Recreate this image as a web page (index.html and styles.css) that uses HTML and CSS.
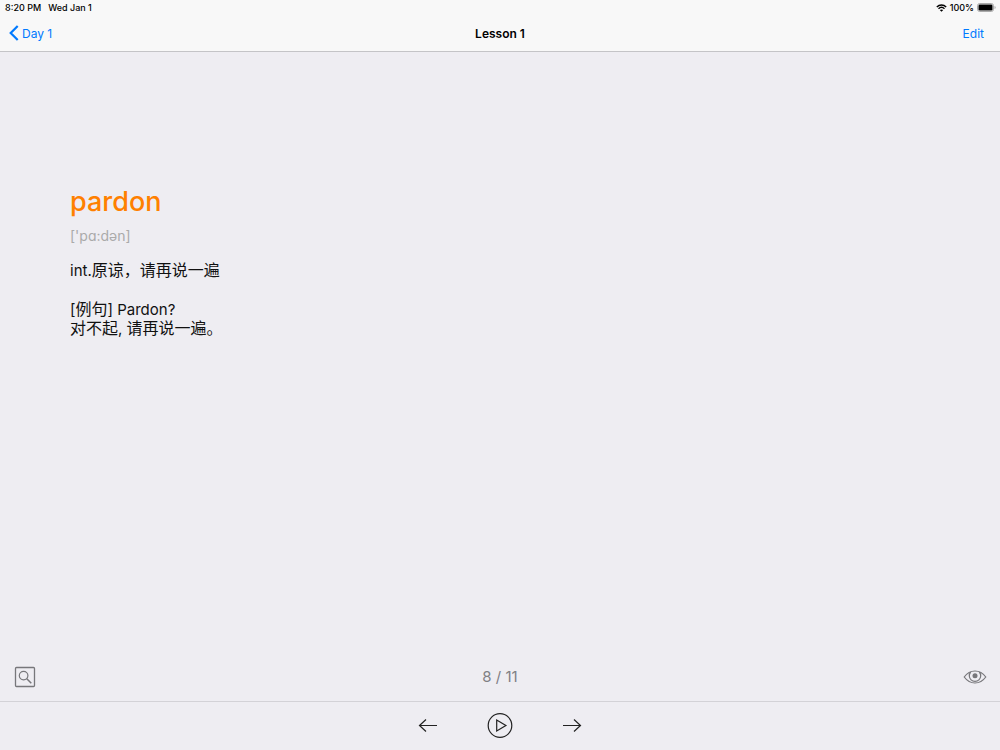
FILE: index.html
```html
<!DOCTYPE html>
<html lang="en">
<head>
    <meta charset="UTF-8">
    <meta name="viewport" content="width=device-width, initial-scale=1.0">
    <title>Lesson 1</title>
    <link rel="stylesheet" href="styles.css">
</head>
<body>
    <header class="top">
        <div class="status-bar">
            <span>8:20 PM</span>
            <span>Wed Jan 1</span>
            <div class="status-right">
                <svg width="11" height="8" viewBox="0 0 11 8" aria-hidden="true">
                    <path d="M0.8 2.9C3.5 0.3 7.5 0.3 10.2 2.9M2.5 4.7C4.2 3.1 6.8 3.1 8.5 4.7" fill="none" stroke="#000" stroke-width="1.4"/>
                    <path d="M3.8 6.1C4.8 5.2 6.2 5.2 7.2 6.1L5.5 7.8Z"/>
                </svg>
                <span>100%</span>
                <svg width="19" height="9" viewBox="0 0 19 9" aria-hidden="true">
                    <rect x="0.5" y="0.5" width="16" height="8" rx="2.2" fill="none" stroke="#aaa"/>
                    <rect x="1.5" y="1.5" width="14" height="6" rx="1.2"/>
                    <path d="M17.6 3v3c1.3-.5 1.3-2.5 0-3z" fill="#999"/>
                </svg>
            </div>
        </div>
        <nav class="nav-bar">
            <a class="back" href="#">
                <svg width="10" height="16" viewBox="0 0 10 16" aria-hidden="true">
                    <path d="M8.7 1L1.7 8l7 7" fill="none" stroke="#007aff" stroke-width="2.2"/>
                </svg>
                <span>Day 1</span>
            </a>
            <h1 class="title">Lesson 1</h1>
            <button class="edit" type="button">Edit</button>
        </nav>
    </header>

    <main class="card">
        <h2 class="word">pardon</h2>
        <p class="phonetic">['pɑ:dən]</p>
        <p class="meaning" lang="zh-CN"><span class="latin">int.</span>原谅，请再说一遍</p>
        <p class="example" lang="zh-CN"><span class="latin">[</span>例句<span class="latin">] Pardon?</span><br>对不起<span class="latin">, </span>请再说一遍。</p>
    </main>

    <div class="tools">
        <button class="icon-btn" type="button" aria-label="Search">
            <svg width="22" height="22" viewBox="0 0 22 22" fill="none" stroke="#77777b" aria-hidden="true">
                <rect x="1.5" y="1.5" width="19" height="19" rx="1" stroke-width="1.3"/>
                <circle cx="9.6" cy="9.6" r="4.3" stroke-width="1.2"/>
                <path d="M12.8 12.8l4.5 4.5" stroke-width="1.5"/>
            </svg>
        </button>
        <span class="progress">8 / 11</span>
        <button class="icon-btn show" type="button" aria-label="Show">
            <svg width="24" height="14" viewBox="0 0 24 14" fill="none" stroke="#77777b" stroke-width="1.2" aria-hidden="true">
                <path d="M1.2 7C4 3.2 7.8 1 12 1s8 2.2 10.8 6C20 10.8 16.2 13 12 13S4 10.8 1.2 7z"/>
                <path d="M7.7 2a5.7 5.7 0 1 0 8.6 0"/>
                <circle cx="12" cy="5.7" r="2.5" fill="#77777b" stroke="none"/>
            </svg>
        </button>
    </div>

    <footer class="player">
        <button class="icon-btn" type="button" aria-label="Previous">
            <svg width="20" height="14" viewBox="0 0 20 14" fill="none" stroke="#222" stroke-width="1.2" aria-hidden="true">
                <path d="M19 6.5H1.5M8 0.5l-6.5 6 6.5 6"/>
            </svg>
        </button>
        <button class="icon-btn" type="button" aria-label="Play">
            <svg width="26" height="26" viewBox="0 0 26 26" fill="none" stroke="#222" stroke-width="1.2" aria-hidden="true">
                <circle cx="13" cy="12.5" r="11.8"/>
                <path d="M9.7 7.1v10.8l9.2-5.4z"/>
            </svg>
        </button>
        <button class="icon-btn" type="button" aria-label="Next">
            <svg width="20" height="14" viewBox="0 0 20 14" fill="none" stroke="#222" stroke-width="1.2" aria-hidden="true">
                <path d="M1 6.5h17.5M12 0.5l6.5 6-6.5 6"/>
            </svg>
        </button>
    </footer>
</body>
</html>
```

FILE: styles.css
```css
* {
    box-sizing: border-box;
    margin: 0;
    padding: 0;
}

body {
    display: flex;
    flex-direction: column;
    min-height: 100vh;
    background: #eeedf2;
    color: #111;
    font-family: Inter, "Noto Sans CJK SC", sans-serif;
}

svg {
    display: block;
}

button {
    border: none;
    background: none;
    font-family: inherit;
    cursor: pointer;
}

.top {
    background: #f8f8f8;
    border-bottom: 1px solid #c4c4c7;
}

.status-bar {
    display: flex;
    align-items: center;
    gap: 7px;
    height: 15px;
    padding: 0 4px 0 5px;
    color: #000;
    font-size: 9px;
    font-weight: 500;
}

.status-right {
    display: flex;
    align-items: center;
    gap: 3px;
    margin-left: auto;
}

.nav-bar {
    display: grid;
    grid-template-columns: 1fr auto 1fr;
    align-items: center;
    height: 36px;
    font-size: 12px;
}

.back {
    display: flex;
    align-items: center;
    gap: 3px;
    justify-self: start;
    padding-left: 9px;
    color: #007aff;
    text-decoration: none;
}

.title {
    color: #000;
    font-size: 12px;
    font-weight: 600;
}

.edit {
    justify-self: end;
    padding-right: 16px;
    color: #007aff;
    font-size: 12px;
}

.card {
    flex: 1;
    padding: 132px 70px 0;
    font-size: 16px;
    line-height: 19px;
}

.word {
    color: #ff8000;
    font-size: 27px;
    font-weight: 500;
    line-height: 36px;
}

.phonetic {
    margin-top: 6px;
    color: #aaa;
    font-size: 14px;
}

.meaning {
    margin-top: 16px;
}

.example {
    margin-top: 20px;
}

.latin {
    font-size: 15px;
}

.tools {
    display: grid;
    grid-template-columns: 1fr auto 1fr;
    align-items: center;
    height: 49px;
}

.icon-btn {
    justify-self: start;
}

.tools .icon-btn {
    margin: 0 13px 0 14px;
}

.tools .show {
    justify-self: end;
}

.progress {
    color: #808084;
    font-size: 15px;
}

.player {
    display: flex;
    justify-content: center;
    align-items: center;
    gap: 49px;
    height: 49px;
    border-top: 1px solid #d3d2d7;
}
```
